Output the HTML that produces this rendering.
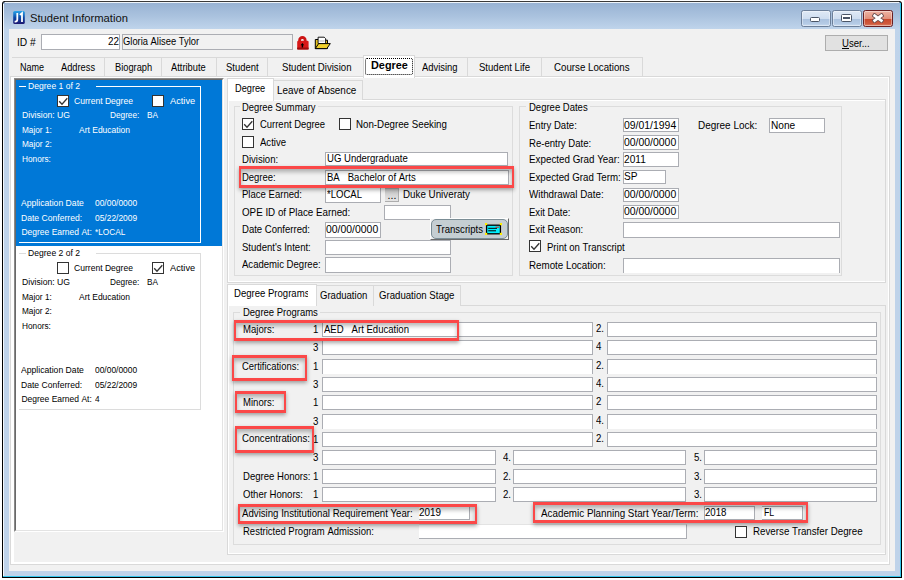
<!DOCTYPE html>
<html><head><meta charset="utf-8"><title>Student Information</title>
<style>
html,body{margin:0;padding:0;background:#fff;width:904px;height:580px;overflow:hidden}
body{position:relative;font-family:"Liberation Sans",sans-serif}
.a{position:absolute}
.t{position:absolute;white-space:nowrap;line-height:1;transform-origin:0 0;color:#000}
.red{border:3px solid #fb4848;border-left-width:2.6px;border-right-width:2.6px;box-sizing:border-box;box-shadow:0 2px 4px rgba(0,0,0,.35), inset 0 3px 4px rgba(0,0,0,.28)}
</style></head><body>
<div class="a" style="left:2px;top:1px;width:900px;height:577px;background:#000;border-radius:3px 3px 0 0"></div>
<div class="a" style="left:3px;top:2px;width:898px;height:575px;background:linear-gradient(#98b3d4 1px,#aac2de 14px,#bfd4eb 27px,#bfd3ea 60px,#bfd3ea 100%);border-radius:2px 2px 0 0"></div>
<div class="a" style="left:900px;top:3px;width:1px;height:574px;background:#34c6ec"></div>
<div class="a" style="left:3px;top:4px;width:1px;height:572px;background:#f4f8fc"></div>
<div class="a" style="left:5px;top:1px;width:894px;height:1px;background:#3a3a3a"></div>
<div class="a" style="left:5px;top:2px;width:894px;height:1px;background:#eef4fa"></div>
<div class="a" style="left:3px;top:576px;width:898px;height:1px;background:#34c6ec"></div>
<div class="a" style="left:9px;top:29px;width:886px;height:542px;background:#f1f1f1"></div>
<svg class="a" style="left:13px;top:11px" width="12" height="13" viewBox="0 0 12 13"><defs><linearGradient id="jg" x1="0" y1="0" x2="0" y2="1"><stop offset="0" stop-color="#2aa6ea"/><stop offset="0.5" stop-color="#0c4aa8"/><stop offset="1" stop-color="#1c1670"/></linearGradient></defs>
<rect x="0.2" y="0" width="11.6" height="13" rx="1.6" fill="url(#jg)"/>
<path d="M4.3,2 V8.6 Q4.3,10.6 2.4,10.6 H1.6" stroke="#fff" stroke-width="1.8" fill="none"/>
<path d="M6.9,3.9 L9,2.2 V10.9" stroke="#fff" stroke-width="1.8" fill="none"/></svg>
<div class="t" style="left:29.60px;top:13.17px;font-size:11.5px;transform:scaleX(0.976);color:#111;">Student&nbsp;Information</div>
<div class="a" style="left:801px;top:10px;width:30px;height:17px;background:linear-gradient(#dfe9f5 0%,#cfdef0 50%,#a9c1de 52%,#b5cbe5 85%,#cadcef 100%);border:1px solid #6c7f99;border-radius:2.5px;box-sizing:border-box;box-shadow:inset 0 0 0 1px rgba(255,255,255,.4)"></div>
<div class="a" style="left:832px;top:10px;width:30px;height:17px;background:linear-gradient(#dfe9f5 0%,#cfdef0 50%,#a9c1de 52%,#b5cbe5 85%,#cadcef 100%);border:1px solid #6c7f99;border-radius:2.5px;box-sizing:border-box;box-shadow:inset 0 0 0 1px rgba(255,255,255,.4)"></div>
<div class="a" style="left:863px;top:10px;width:30px;height:17px;background:linear-gradient(#eeb3a3 0%,#e2917c 50%,#c8462a 52%,#cf5a3d 85%,#e0876d 100%);border:1px solid #6a1f22;border-radius:2.5px;box-sizing:border-box;box-shadow:inset 0 0 0 1px rgba(255,255,255,.4)"></div>
<div class="a" style="left:810px;top:17px;width:10px;height:5px;background:#fff;border:1px solid #4a5566;box-sizing:border-box;border-radius:1.5px"></div>
<div class="a" style="left:841px;top:14px;width:11px;height:8px;background:#fff;border:1px solid #4a5566;box-sizing:border-box;border-radius:1.5px"></div>
<div class="a" style="left:843px;top:17px;width:7px;height:2px;background:#4a5566"></div>
<svg class="a" style="left:872px;top:13px" width="12" height="10" viewBox="0 0 12 10"><path d="M2.6,2.6 L9.4,7.6 M9.4,2.6 L2.6,7.6" stroke="#6b5050" stroke-width="4.4" stroke-linecap="square"/><path d="M2.6,2.6 L9.4,7.6 M9.4,2.6 L2.6,7.6" stroke="#fff" stroke-width="2.6" stroke-linecap="square"/></svg>
<div class="t" style="left:17.30px;top:36.81px;font-size:10.5px;transform:scaleX(0.976);">ID&nbsp;#</div>
<div class="a" style="left:41px;top:34px;width:79px;height:16px;background:#fff;border:1px solid #abadb3;box-sizing:border-box;"></div>
<div class="t" style="left:107.90px;top:36.31px;font-size:10.5px;transform:scaleX(0.942);">22</div>
<div class="a" style="left:122px;top:34px;width:171px;height:16px;background:#f1f1f1;border:1px solid #abadb3;box-sizing:border-box;"></div>
<div class="t" style="left:123.20px;top:36.31px;font-size:10.5px;transform:scaleX(0.893);">Gloria&nbsp;Alisee&nbsp;Tylor</div>
<svg class="a" style="left:296px;top:35px" width="15" height="16" viewBox="0 0 15 16">
<path d="M3.6,7 V5.3 A2.8,2.8 0 0 1 9.2,5.3 V7" fill="none" stroke="#cc1414" stroke-width="2.8"/>
<rect x="1.2" y="5.8" width="11.4" height="8.7" rx="1.2" fill="#d81818"/>
<rect x="1.2" y="12.6" width="11.4" height="1.9" fill="#9a0c0c"/>
<path d="M6.4,8 L4.6,10.2 H5.7 V12.4 H7.1 V10.2 H8.2 Z" fill="#000"/></svg>
<svg class="a" style="left:314px;top:36px" width="18" height="14" viewBox="0 0 18 14">
<path d="M1.3,3.5 H4.2 L5,4.2 H13.5 V12.6 H1.3 Z" fill="#e6c21e" stroke="#000" stroke-width="1"/>
<path d="M4.1,1.2 H10.2 L11.6,2.6 V7.5 H4.1 Z" fill="#fff" stroke="#000" stroke-width="0.9"/>
<path d="M5.2,5 H10.5" stroke="#999" stroke-width="0.8"/>
<path d="M1.3,12.6 L4.6,7.6 H16.3 L12.8,12.6 Z" fill="#f0d02a" stroke="#000" stroke-width="1"/></svg>
<div class="a" style="left:825px;top:35px;width:63px;height:16px;background:#e1e1e1;border:1px solid #adadad;box-sizing:border-box"></div>
<div class="t" style="left:842.30px;top:38.41px;font-size:10.5px;transform:scaleX(0.913);">User...</div>
<div class="a" style="left:842px;top:48px;width:7px;height:1px;background:#000"></div>
<div class="a" style="left:12px;top:57px;width:631px;height:1px;background:#d9d9d9"></div>
<div class="a" style="left:104px;top:57px;width:1px;height:20px;background:#d9d9d9"></div>
<div class="a" style="left:161px;top:57px;width:1px;height:20px;background:#d9d9d9"></div>
<div class="a" style="left:216px;top:57px;width:1px;height:20px;background:#d9d9d9"></div>
<div class="a" style="left:267px;top:57px;width:1px;height:20px;background:#d9d9d9"></div>
<div class="a" style="left:467px;top:57px;width:1px;height:20px;background:#d9d9d9"></div>
<div class="a" style="left:541px;top:57px;width:1px;height:20px;background:#d9d9d9"></div>
<div class="a" style="left:642px;top:57px;width:1px;height:20px;background:#d9d9d9"></div>
<div class="t" style="left:19.70px;top:61.71px;font-size:10.5px;transform:scaleX(0.860);">Name</div>
<div class="t" style="left:61.00px;top:61.71px;font-size:10.5px;transform:scaleX(0.883);">Address</div>
<div class="t" style="left:114.60px;top:61.71px;font-size:10.5px;transform:scaleX(0.883);">Biograph</div>
<div class="t" style="left:171.30px;top:61.71px;font-size:10.5px;transform:scaleX(0.887);">Attribute</div>
<div class="t" style="left:225.50px;top:61.71px;font-size:10.5px;transform:scaleX(0.898);">Student</div>
<div class="t" style="left:281.50px;top:61.71px;font-size:10.5px;transform:scaleX(0.916);">Student&nbsp;Division</div>
<div class="t" style="left:422.40px;top:61.71px;font-size:10.5px;transform:scaleX(0.897);">Advising</div>
<div class="t" style="left:479.00px;top:61.71px;font-size:10.5px;transform:scaleX(0.910);">Student&nbsp;Life</div>
<div class="t" style="left:554.40px;top:61.71px;font-size:10.5px;transform:scaleX(0.925);">Course&nbsp;Locations</div>
<div class="a" style="left:10px;top:76px;width:880px;height:489px;border:1px solid #d9d9d9;box-sizing:border-box;box-shadow:inset 0 0 0 1px #fff, inset 0 -2px 0 #fff, inset 3px 0 0 #fff"></div>
<div class="a" style="left:363px;top:55px;width:52px;height:23px;background:#fff;border:1px solid #d9d9d9;border-bottom:none;box-sizing:border-box"></div>
<div class="t" style="left:370.90px;top:60.09px;font-size:11px;transform:scaleX(0.987);font-weight:bold;">Degree</div>
<div class="a" style="left:365px;top:58px;width:48px;height:17px;border:1px dotted #000;border-radius:2px;box-sizing:border-box"></div>
<div class="a" style="left:11px;top:77px;width:3px;height:455px;background:#fff"></div>
<div class="a" style="left:11px;top:77px;width:213px;height:1px;background:#fff"></div>
<div class="a" style="left:14px;top:78px;width:210px;height:454px;background:#fff;border-left:1px solid #8a8a8a;border-top:1px solid #8a8a8a;border-right:1px solid #fff;border-bottom:1px solid #fff;box-sizing:border-box"></div>
<div class="a" style="left:15px;top:79px;width:208px;height:452px;border-left:1px solid #696969;border-top:1px solid #696969;border-right:1px solid #e3e3e3;border-bottom:1px solid #e3e3e3;box-sizing:border-box"></div>
<div class="a" style="left:16px;top:80px;width:206px;height:166px;background:#0078d7"></div>
<div class="a" style="left:19px;top:86px;width:182px;height:157px;border:1px solid #fff;border-top:none;border-left:none;box-sizing:border-box"></div>
<div class="a" style="left:19px;top:86px;width:7px;height:1px;background:#fff"></div>
<div class="a" style="left:96px;top:86px;width:105px;height:1px;background:#fff"></div>
<div class="t" style="left:27.80px;top:82.30px;font-size:8.5px;transform:scaleX(1.010);color:#fff;">Degree&nbsp;1&nbsp;of&nbsp;2</div>
<div class="a" style="left:57px;top:95px;width:12px;height:12px;background:#fff;border:1px solid #333;box-sizing:border-box"></div>
<svg class="a" style="left:57px;top:95px" width="12" height="12" viewBox="0 0 12 12"><polyline points="2.2,6.2 5,9.2 10.3,3.3" fill="none" stroke="#333" stroke-width="1.3"/></svg>
<div class="t" style="left:74.30px;top:96.50px;font-size:8.5px;transform:scaleX(1.007);color:#fff;">Current&nbsp;Degree</div>
<div class="a" style="left:152px;top:95px;width:12px;height:12px;background:#fff;border:1px solid #333;box-sizing:border-box"></div>
<div class="t" style="left:169.80px;top:96.50px;font-size:8.5px;transform:scaleX(1.089);color:#fff;">Active</div>
<div class="t" style="left:21.60px;top:110.60px;font-size:8.5px;transform:scaleX(1.016);color:#fff;">Division:&nbsp;UG</div>
<div class="t" style="left:109.60px;top:110.60px;font-size:8.5px;transform:scaleX(0.970);color:#fff;">Degree:</div>
<div class="t" style="left:146.50px;top:110.60px;font-size:8.5px;transform:scaleX(0.970);color:#fff;">BA</div>
<div class="t" style="left:21.60px;top:125.60px;font-size:8.5px;transform:scaleX(0.970);color:#fff;">Major&nbsp;1:</div>
<div class="t" style="left:79.00px;top:125.60px;font-size:8.5px;color:#fff;">Art&nbsp;Education</div>
<div class="t" style="left:21.60px;top:140.10px;font-size:8.5px;transform:scaleX(0.970);color:#fff;">Major&nbsp;2:</div>
<div class="t" style="left:21.60px;top:154.60px;font-size:8.5px;transform:scaleX(0.970);color:#fff;">Honors:</div>
<div class="t" style="left:21.40px;top:199.20px;font-size:8.5px;transform:scaleX(1.015);color:#fff;">Application&nbsp;Date</div>
<div class="t" style="left:95.10px;top:199.20px;font-size:8.5px;transform:scaleX(0.990);color:#fff;">00/00/0000</div>
<div class="t" style="left:21.40px;top:213.80px;font-size:8.5px;transform:scaleX(1.010);color:#fff;">Date&nbsp;Conferred:</div>
<div class="t" style="left:95.10px;top:213.80px;font-size:8.5px;transform:scaleX(0.990);color:#fff;">05/22/2009</div>
<div class="t" style="left:21.40px;top:228.40px;font-size:8.5px;color:#fff;">Degree&nbsp;Earned&nbsp;At:</div>
<div class="t" style="left:95.10px;top:228.40px;font-size:8.5px;transform:scaleX(0.970);color:#fff;">*LOCAL</div>
<div class="a" style="left:19px;top:253px;width:182px;height:157px;border:1px solid #dcdcdc;border-top:none;border-left:none;box-sizing:border-box"></div>
<div class="a" style="left:19px;top:253px;width:7px;height:1px;background:#dcdcdc"></div>
<div class="a" style="left:96px;top:253px;width:105px;height:1px;background:#dcdcdc"></div>
<div class="t" style="left:27.80px;top:249.30px;font-size:8.5px;transform:scaleX(1.010);">Degree&nbsp;2&nbsp;of&nbsp;2</div>
<div class="a" style="left:57px;top:262px;width:12px;height:12px;background:#fff;border:1px solid #333;box-sizing:border-box"></div>
<div class="t" style="left:74.30px;top:263.50px;font-size:8.5px;transform:scaleX(1.007);">Current&nbsp;Degree</div>
<div class="a" style="left:152px;top:262px;width:12px;height:12px;background:#fff;border:1px solid #333;box-sizing:border-box"></div>
<svg class="a" style="left:152px;top:262px" width="12" height="12" viewBox="0 0 12 12"><polyline points="2.2,6.2 5,9.2 10.3,3.3" fill="none" stroke="#333" stroke-width="1.3"/></svg>
<div class="t" style="left:169.80px;top:263.50px;font-size:8.5px;transform:scaleX(1.089);">Active</div>
<div class="t" style="left:21.60px;top:277.60px;font-size:8.5px;transform:scaleX(1.016);">Division:&nbsp;UG</div>
<div class="t" style="left:109.60px;top:277.60px;font-size:8.5px;transform:scaleX(0.970);">Degree:</div>
<div class="t" style="left:146.50px;top:277.60px;font-size:8.5px;transform:scaleX(0.970);">BA</div>
<div class="t" style="left:21.60px;top:292.60px;font-size:8.5px;transform:scaleX(0.970);">Major&nbsp;1:</div>
<div class="t" style="left:79.00px;top:292.60px;font-size:8.5px;">Art&nbsp;Education</div>
<div class="t" style="left:21.60px;top:307.10px;font-size:8.5px;transform:scaleX(0.970);">Major&nbsp;2:</div>
<div class="t" style="left:21.60px;top:321.60px;font-size:8.5px;transform:scaleX(0.970);">Honors:</div>
<div class="t" style="left:21.40px;top:366.20px;font-size:8.5px;transform:scaleX(1.015);">Application&nbsp;Date</div>
<div class="t" style="left:95.10px;top:366.20px;font-size:8.5px;transform:scaleX(0.990);">00/00/0000</div>
<div class="t" style="left:21.40px;top:380.80px;font-size:8.5px;transform:scaleX(1.010);">Date&nbsp;Conferred:</div>
<div class="t" style="left:95.10px;top:380.80px;font-size:8.5px;transform:scaleX(0.990);">05/22/2009</div>
<div class="t" style="left:21.40px;top:395.40px;font-size:8.5px;">Degree&nbsp;Earned&nbsp;At:</div>
<div class="t" style="left:95.10px;top:395.40px;font-size:8.5px;transform:scaleX(0.970);">4</div>
<div class="a" style="left:227px;top:99px;width:659px;height:184px;border:1px solid #d9d9d9;box-sizing:border-box;box-shadow:inset 1px -1px 0 #fff, inset 0 1px 0 #fff"></div>
<div class="a" style="left:273px;top:80px;width:90px;height:20px;background:#f1f1f1;border:1px solid #d9d9d9;border-bottom:none;box-sizing:border-box"></div>
<div class="a" style="left:227px;top:78px;width:47px;height:23px;background:#fff;border:1px solid #d9d9d9;border-bottom:none;box-sizing:border-box"></div>
<div class="t" style="left:234.60px;top:83.41px;font-size:10.5px;transform:scaleX(0.877);">Degree</div>
<div class="t" style="left:277.20px;top:84.51px;font-size:10.5px;transform:scaleX(0.944);">Leave&nbsp;of&nbsp;Absence</div>
<div class="a" style="left:234px;top:106px;width:279px;height:170px;border:1px solid #dcdcdc;box-sizing:border-box"></div>
<div class="a" style="left:240px;top:103px;width:78px;height:9px;background:#f1f1f1"></div>
<div class="t" style="left:242.40px;top:102.31px;font-size:10.5px;transform:scaleX(0.893);">Degree&nbsp;Summary</div>
<div class="a" style="left:242px;top:118px;width:12px;height:12px;background:#fff;border:1px solid #333;box-sizing:border-box"></div>
<svg class="a" style="left:242px;top:118px" width="12" height="12" viewBox="0 0 12 12"><polyline points="2.2,6.2 5,9.2 10.3,3.3" fill="none" stroke="#333" stroke-width="1.3"/></svg>
<div class="t" style="left:259.80px;top:119.41px;font-size:10.5px;transform:scaleX(0.900);">Current&nbsp;Degree</div>
<div class="a" style="left:339px;top:118px;width:12px;height:12px;background:#fff;border:1px solid #333;box-sizing:border-box"></div>
<div class="t" style="left:356.10px;top:119.41px;font-size:10.5px;transform:scaleX(0.927);">Non-Degree&nbsp;Seeking</div>
<div class="a" style="left:242px;top:136px;width:12px;height:12px;background:#fff;border:1px solid #333;box-sizing:border-box"></div>
<div class="t" style="left:259.90px;top:136.91px;font-size:10.5px;transform:scaleX(0.910);">Active</div>
<div class="t" style="left:242.40px;top:154.01px;font-size:10.5px;transform:scaleX(0.910);">Division:</div>
<div class="a" style="left:325px;top:152px;width:183px;height:14px;background:#fff;border:1px solid #abadb3;box-sizing:border-box;"></div>
<div class="t" style="left:327.00px;top:153.41px;font-size:10.5px;transform:scaleX(0.910);">UG&nbsp;Undergraduate</div>
<div class="t" style="left:242.40px;top:171.91px;font-size:10.5px;transform:scaleX(0.902);">Degree:</div>
<div class="a" style="left:325px;top:170px;width:184px;height:15px;background:#fff;border:1px solid #abadb3;box-sizing:border-box;"></div>
<div class="t" style="left:327.00px;top:171.61px;font-size:10.5px;transform:scaleX(0.910);">BA&nbsp;&nbsp;&nbsp;Bachelor&nbsp;of&nbsp;Arts</div>
<div class="t" style="left:242.40px;top:188.81px;font-size:10.5px;transform:scaleX(0.910);">Place&nbsp;Earned:</div>
<div class="a" style="left:325px;top:187px;width:56px;height:16px;background:#fff;border:1px solid #abadb3;box-sizing:border-box;"></div>
<div class="t" style="left:327.00px;top:188.91px;font-size:10.5px;transform:scaleX(0.910);">*LOCAL</div>
<div class="a" style="left:385px;top:188px;width:14px;height:14px;background:linear-gradient(#c4c4c4,#e6e6e6);border:1px solid #adadad;border-left:none;box-sizing:border-box"></div>
<div class="t" style="left:387.60px;top:189.61px;font-size:10.5px;">...</div>
<div class="t" style="left:403.20px;top:189.11px;font-size:10.5px;transform:scaleX(0.933);">Duke&nbsp;Univeraty</div>
<div class="t" style="left:242.00px;top:206.91px;font-size:10.5px;transform:scaleX(0.932);">OPE&nbsp;ID&nbsp;of&nbsp;Place&nbsp;Earned:</div>
<div class="a" style="left:384px;top:205px;width:67px;height:15px;background:#fff;border:1px solid #abadb3;box-sizing:border-box;"></div>
<div class="t" style="left:242.40px;top:224.01px;font-size:10.5px;transform:scaleX(0.910);">Date&nbsp;Conferred:</div>
<div class="a" style="left:325px;top:222px;width:56px;height:16px;background:#fff;border:1px solid #abadb3;box-sizing:border-box;"></div>
<div class="t" style="left:326.20px;top:223.79px;font-size:11px;transform:scaleX(0.948);">00/00/0000</div>
<div class="t" style="left:242.40px;top:241.71px;font-size:10.5px;transform:scaleX(0.910);">Student's&nbsp;Intent:</div>
<div class="a" style="left:325px;top:240px;width:126px;height:15px;background:#fff;border:1px solid #abadb3;box-sizing:border-box;"></div>
<div class="t" style="left:242.40px;top:259.11px;font-size:10.5px;transform:scaleX(0.910);">Academic&nbsp;Degree:</div>
<div class="a" style="left:325px;top:257px;width:126px;height:16px;background:#fff;border:1px solid #abadb3;box-sizing:border-box;"></div>
<div class="a" style="left:430px;top:218px;width:79px;height:22px;background:#f1f1f1;border-top:1px solid #fff;border-left:1px solid #fff;border-right:1px solid #6a6a6a;border-bottom:1px solid #6a6a6a;box-sizing:border-box"></div>
<div class="a" style="left:431px;top:219px;width:77px;height:20px;background:#c5ced2;border:1px solid #7b8d95;border-radius:5px;box-sizing:border-box"></div>
<div class="t" style="left:436.20px;top:224.11px;font-size:10.5px;transform:scaleX(0.912);">Transcripts</div>
<svg class="a" style="left:485px;top:223px" width="17" height="12" viewBox="0 0 17 12">
<rect x="0" y="0" width="17" height="12" fill="#c8c8c8"/>
<rect x="1.6" y="2.2" width="13.8" height="8.6" fill="#00f0ff" stroke="#000" stroke-width="1.3"/>
<path d="M3.2,5.3 H12 M3.2,7.8 H11" stroke="#000" stroke-width="1"/><path d="M10.5,4.2 H14" stroke="#e0201a" stroke-width="1"/>
<rect x="0" y="0" width="2.2" height="2.2" fill="#ffee00"/><rect x="14.8" y="0" width="2.2" height="2.2" fill="#ffee00"/>
<rect x="0" y="9.8" width="2.2" height="2.2" fill="#ffee00"/><rect x="14.8" y="9.8" width="2.2" height="2.2" fill="#ffee00"/></svg>
<div class="a red" style="left:239px;top:166px;width:275px;height:22px"></div>
<div class="a" style="left:519px;top:106px;width:323px;height:170px;border:1px solid #dcdcdc;box-sizing:border-box"></div>
<div class="a" style="left:526px;top:103px;width:64px;height:9px;background:#f1f1f1"></div>
<div class="t" style="left:528.50px;top:101.61px;font-size:10.5px;transform:scaleX(0.905);">Degree&nbsp;Dates</div>
<div class="t" style="left:528.90px;top:120.01px;font-size:10.5px;transform:scaleX(0.910);">Entry&nbsp;Date:</div>
<div class="a" style="left:623px;top:118px;width:56px;height:14px;background:#fff;border:1px solid #abadb3;box-sizing:border-box;"></div>
<div class="t" style="left:624.30px;top:119.59px;font-size:11px;transform:scaleX(0.948);">09/01/1994</div>
<div class="t" style="left:528.90px;top:137.51px;font-size:10.5px;transform:scaleX(0.910);">Re-entry&nbsp;Date:</div>
<div class="a" style="left:623px;top:135px;width:56px;height:15px;background:#fff;border:1px solid #abadb3;box-sizing:border-box;"></div>
<div class="t" style="left:624.30px;top:137.09px;font-size:11px;transform:scaleX(0.948);">00/00/0000</div>
<div class="t" style="left:528.90px;top:154.41px;font-size:10.5px;transform:scaleX(0.935);">Expected&nbsp;Grad&nbsp;Year:</div>
<div class="a" style="left:623px;top:152px;width:56px;height:15px;background:#fff;border:1px solid #abadb3;box-sizing:border-box;"></div>
<div class="t" style="left:624.30px;top:153.99px;font-size:11px;transform:scaleX(0.920);">2011</div>
<div class="t" style="left:528.90px;top:171.71px;font-size:10.5px;transform:scaleX(0.925);">Expected&nbsp;Grad&nbsp;Term:</div>
<div class="a" style="left:623px;top:170px;width:43px;height:14px;background:#fff;border:1px solid #abadb3;box-sizing:border-box;"></div>
<div class="t" style="left:624.30px;top:171.29px;font-size:11px;transform:scaleX(0.920);">SP</div>
<div class="t" style="left:528.90px;top:189.41px;font-size:10.5px;transform:scaleX(0.934);">Withdrawal&nbsp;Date:</div>
<div class="a" style="left:623px;top:188px;width:56px;height:14px;background:#fff;border:1px solid #abadb3;box-sizing:border-box;"></div>
<div class="t" style="left:624.30px;top:188.99px;font-size:11px;transform:scaleX(0.948);">00/00/0000</div>
<div class="t" style="left:528.90px;top:206.91px;font-size:10.5px;transform:scaleX(0.910);">Exit&nbsp;Date:</div>
<div class="a" style="left:623px;top:205px;width:56px;height:14px;background:#fff;border:1px solid #abadb3;box-sizing:border-box;"></div>
<div class="t" style="left:624.30px;top:206.49px;font-size:11px;transform:scaleX(0.948);">00/00/0000</div>
<div class="t" style="left:528.90px;top:223.91px;font-size:10.5px;transform:scaleX(0.910);">Exit&nbsp;Reason:</div>
<div class="a" style="left:623px;top:222px;width:217px;height:16px;background:#fff;border:1px solid #abadb3;box-sizing:border-box;"></div>
<div class="t" style="left:697.50px;top:120.01px;font-size:10.5px;transform:scaleX(0.948);">Degree&nbsp;Lock:</div>
<div class="a" style="left:769px;top:118px;width:56px;height:15px;background:#fff;border:1px solid #abadb3;box-sizing:border-box;"></div>
<div class="t" style="left:770.50px;top:119.59px;font-size:11px;transform:scaleX(0.920);">None</div>
<div class="a" style="left:529px;top:240px;width:12px;height:12px;background:#fff;border:1px solid #333;box-sizing:border-box"></div>
<svg class="a" style="left:529px;top:240px" width="12" height="12" viewBox="0 0 12 12"><polyline points="2.2,6.2 5,9.2 10.3,3.3" fill="none" stroke="#333" stroke-width="1.3"/></svg>
<div class="t" style="left:546.50px;top:241.81px;font-size:10.5px;transform:scaleX(0.910);">Print&nbsp;on&nbsp;Transcript</div>
<div class="t" style="left:528.90px;top:259.71px;font-size:10.5px;transform:scaleX(0.932);">Remote&nbsp;Location:</div>
<div class="a" style="left:623px;top:258px;width:217px;height:15px;background:#fff;border:1px solid #abadb3;border-bottom:none;box-sizing:border-box"></div>
<div class="a" style="left:227px;top:305px;width:659px;height:250px;border:1px solid #d9d9d9;box-sizing:border-box;box-shadow:inset 1px -1px 0 #fff"></div>
<div class="a" style="left:316px;top:285px;width:58px;height:21px;background:#f1f1f1;border:1px solid #d9d9d9;border-bottom:none;box-sizing:border-box"></div>
<div class="a" style="left:373px;top:285px;width:88px;height:21px;background:#f1f1f1;border:1px solid #d9d9d9;border-bottom:none;box-sizing:border-box"></div>
<div class="a" style="left:227px;top:284px;width:90px;height:22px;background:#fff;border:1px solid #d9d9d9;border-bottom:none;box-sizing:border-box"></div>
<div class="a" style="left:229px;top:286px;width:79px;height:16px;overflow:hidden">
<div class="t" style="left:5.20px;top:1.81px;font-size:10.5px;transform:scaleX(0.910);">Degree&nbsp;Programs</div>
</div>
<div class="t" style="left:319.70px;top:290.01px;font-size:10.5px;transform:scaleX(0.910);">Graduation</div>
<div class="t" style="left:378.70px;top:290.01px;font-size:10.5px;transform:scaleX(0.917);">Graduation&nbsp;Stage</div>
<div class="a" style="left:233px;top:312px;width:648px;height:233px;border:1px solid #dcdcdc;box-sizing:border-box"></div>
<div class="a" style="left:240px;top:309px;width:80px;height:9px;background:#f1f1f1"></div>
<div class="t" style="left:242.50px;top:307.41px;font-size:10.5px;transform:scaleX(0.903);">Degree&nbsp;Programs</div>
<div class="a" style="left:322px;top:322px;width:271px;height:15px;background:#fff;border:1px solid #abadb3;box-sizing:border-box;"></div>
<div class="a" style="left:607px;top:322px;width:270px;height:15px;background:#fff;border:1px solid #abadb3;box-sizing:border-box;"></div>
<div class="t" style="left:312.60px;top:323.71px;font-size:10.5px;transform:scaleX(0.920);">1</div>
<div class="t" style="left:595.70px;top:323.11px;font-size:10.5px;transform:scaleX(0.920);">2.</div>
<div class="a" style="left:322px;top:340px;width:271px;height:15px;background:#fff;border:1px solid #abadb3;box-sizing:border-box;"></div>
<div class="a" style="left:607px;top:340px;width:270px;height:15px;background:#fff;border:1px solid #abadb3;box-sizing:border-box;"></div>
<div class="t" style="left:312.60px;top:341.71px;font-size:10.5px;transform:scaleX(0.920);">3</div>
<div class="t" style="left:595.70px;top:341.11px;font-size:10.5px;transform:scaleX(0.920);">4</div>
<div class="a" style="left:322px;top:359px;width:271px;height:15px;background:#fff;border:1px solid #abadb3;box-sizing:border-box;border-bottom:none"></div>
<div class="a" style="left:607px;top:359px;width:270px;height:15px;background:#fff;border:1px solid #abadb3;box-sizing:border-box;border-bottom:none"></div>
<div class="t" style="left:312.60px;top:360.71px;font-size:10.5px;transform:scaleX(0.920);">1</div>
<div class="t" style="left:595.70px;top:360.11px;font-size:10.5px;transform:scaleX(0.920);">2.</div>
<div class="a" style="left:322px;top:377px;width:271px;height:15px;background:#fff;border:1px solid #abadb3;box-sizing:border-box;"></div>
<div class="a" style="left:607px;top:377px;width:270px;height:15px;background:#fff;border:1px solid #abadb3;box-sizing:border-box;"></div>
<div class="t" style="left:312.60px;top:378.71px;font-size:10.5px;transform:scaleX(0.920);">3</div>
<div class="t" style="left:595.70px;top:378.11px;font-size:10.5px;transform:scaleX(0.920);">4.</div>
<div class="a" style="left:322px;top:395px;width:271px;height:15px;background:#fff;border:1px solid #abadb3;box-sizing:border-box;"></div>
<div class="a" style="left:607px;top:395px;width:270px;height:15px;background:#fff;border:1px solid #abadb3;box-sizing:border-box;"></div>
<div class="t" style="left:312.60px;top:396.71px;font-size:10.5px;transform:scaleX(0.920);">1</div>
<div class="t" style="left:595.70px;top:396.11px;font-size:10.5px;transform:scaleX(0.920);">2</div>
<div class="a" style="left:322px;top:414px;width:271px;height:15px;background:#fff;border:1px solid #abadb3;box-sizing:border-box;border-bottom:none"></div>
<div class="a" style="left:607px;top:414px;width:270px;height:15px;background:#fff;border:1px solid #abadb3;box-sizing:border-box;border-bottom:none"></div>
<div class="t" style="left:312.60px;top:415.71px;font-size:10.5px;transform:scaleX(0.920);">3</div>
<div class="t" style="left:595.70px;top:415.11px;font-size:10.5px;transform:scaleX(0.920);">4.</div>
<div class="a" style="left:322px;top:432px;width:271px;height:15px;background:#fff;border:1px solid #abadb3;box-sizing:border-box;"></div>
<div class="a" style="left:607px;top:432px;width:270px;height:15px;background:#fff;border:1px solid #abadb3;box-sizing:border-box;"></div>
<div class="t" style="left:312.60px;top:433.71px;font-size:10.5px;transform:scaleX(0.920);">1</div>
<div class="t" style="left:595.70px;top:433.11px;font-size:10.5px;transform:scaleX(0.920);">2.</div>
<div class="t" style="left:324.00px;top:324.41px;font-size:10.5px;transform:scaleX(0.910);">AED&nbsp;&nbsp;&nbsp;Art&nbsp;Education</div>
<div class="a" style="left:322px;top:450px;width:174px;height:15px;background:#fff;border:1px solid #abadb3;box-sizing:border-box;"></div>
<div class="a" style="left:513px;top:450px;width:173px;height:15px;background:#fff;border:1px solid #abadb3;box-sizing:border-box;"></div>
<div class="a" style="left:704px;top:450px;width:173px;height:15px;background:#fff;border:1px solid #abadb3;box-sizing:border-box;"></div>
<div class="t" style="left:312.60px;top:451.71px;font-size:10.5px;transform:scaleX(0.920);">3</div>
<div class="t" style="left:502.80px;top:451.51px;font-size:10.5px;transform:scaleX(0.920);">4.</div>
<div class="t" style="left:694.00px;top:451.51px;font-size:10.5px;transform:scaleX(0.920);">5.</div>
<div class="a" style="left:322px;top:469px;width:174px;height:15px;background:#fff;border:1px solid #abadb3;box-sizing:border-box;"></div>
<div class="a" style="left:513px;top:469px;width:173px;height:15px;background:#fff;border:1px solid #abadb3;box-sizing:border-box;"></div>
<div class="a" style="left:704px;top:469px;width:173px;height:15px;background:#fff;border:1px solid #abadb3;box-sizing:border-box;"></div>
<div class="t" style="left:312.60px;top:470.71px;font-size:10.5px;transform:scaleX(0.920);">1</div>
<div class="t" style="left:502.80px;top:470.51px;font-size:10.5px;transform:scaleX(0.920);">2.</div>
<div class="t" style="left:694.00px;top:470.51px;font-size:10.5px;transform:scaleX(0.920);">3.</div>
<div class="a" style="left:322px;top:487px;width:174px;height:15px;background:#fff;border:1px solid #abadb3;box-sizing:border-box;"></div>
<div class="a" style="left:513px;top:487px;width:173px;height:15px;background:#fff;border:1px solid #abadb3;box-sizing:border-box;"></div>
<div class="a" style="left:704px;top:487px;width:173px;height:15px;background:#fff;border:1px solid #abadb3;box-sizing:border-box;"></div>
<div class="t" style="left:312.60px;top:488.71px;font-size:10.5px;transform:scaleX(0.920);">1</div>
<div class="t" style="left:502.80px;top:488.51px;font-size:10.5px;transform:scaleX(0.920);">2.</div>
<div class="t" style="left:694.00px;top:488.51px;font-size:10.5px;transform:scaleX(0.920);">3.</div>
<div class="t" style="left:242.50px;top:470.51px;font-size:10.5px;transform:scaleX(0.910);">Degree&nbsp;Honors:</div>
<div class="t" style="left:242.50px;top:488.51px;font-size:10.5px;transform:scaleX(0.910);">Other&nbsp;Honors:</div>
<div class="t" style="left:242.90px;top:324.11px;font-size:10.5px;transform:scaleX(0.910);">Majors:</div>
<div class="t" style="left:242.10px;top:360.61px;font-size:10.5px;transform:scaleX(0.896);">Certifications:</div>
<div class="t" style="left:242.70px;top:396.81px;font-size:10.5px;transform:scaleX(0.910);">Minors:</div>
<div class="t" style="left:241.70px;top:433.31px;font-size:10.5px;transform:scaleX(0.925);">Concentrations:</div>
<div class="a red" style="left:234px;top:320px;width:225px;height:21px"></div>
<div class="a red" style="left:232px;top:355px;width:75px;height:26px"></div>
<div class="a red" style="left:235px;top:391px;width:51px;height:22px"></div>
<div class="a red" style="left:235px;top:426px;width:79px;height:27px"></div>
<div class="t" style="left:242.40px;top:507.51px;font-size:10.5px;transform:scaleX(0.919);">Advising&nbsp;Institutional&nbsp;Requirement&nbsp;Year:</div>
<div class="a" style="left:419px;top:506px;width:51px;height:14px;background:#fff;border:1px solid #abadb3;box-sizing:border-box;border-left:none"></div>
<div class="t" style="left:419.40px;top:506.87px;font-size:11.5px;transform:scaleX(0.860);">2019</div>
<div class="t" style="left:242.70px;top:525.91px;font-size:10.5px;transform:scaleX(0.904);">Restricted&nbsp;Program&nbsp;Admission:</div>
<div class="a" style="left:419px;top:524px;width:268px;height:15px;background:#fff;border-top:1px solid #e3e3e3;border-bottom:1px solid #abadb3;border-right:1px solid #abadb3;box-sizing:border-box"></div>
<div class="a red" style="left:238px;top:504px;width:239px;height:20px"></div>
<div class="t" style="left:540.90px;top:507.61px;font-size:10.5px;transform:scaleX(0.936);">Academic&nbsp;Planning&nbsp;Start&nbsp;Year/Term:</div>
<div class="a" style="left:704px;top:506px;width:51px;height:14px;background:#fff;border:1px solid #abadb3;box-sizing:border-box;"></div>
<div class="t" style="left:705.40px;top:506.87px;font-size:11.5px;transform:scaleX(0.840);">2018</div>
<div class="a" style="left:762px;top:506px;width:41px;height:14px;background:#fff;border:1px solid #abadb3;box-sizing:border-box;border-left:none"></div>
<div class="t" style="left:763.80px;top:506.87px;font-size:11.5px;transform:scaleX(0.760);">FL</div>
<div class="a red" style="left:533px;top:502px;width:275px;height:21px"></div>
<div class="a" style="left:735px;top:526px;width:12px;height:12px;background:#fff;border:1px solid #333;box-sizing:border-box"></div>
<div class="t" style="left:752.60px;top:525.51px;font-size:10.5px;transform:scaleX(0.929);">Reverse&nbsp;Transfer&nbsp;Degree</div>
</body></html>
